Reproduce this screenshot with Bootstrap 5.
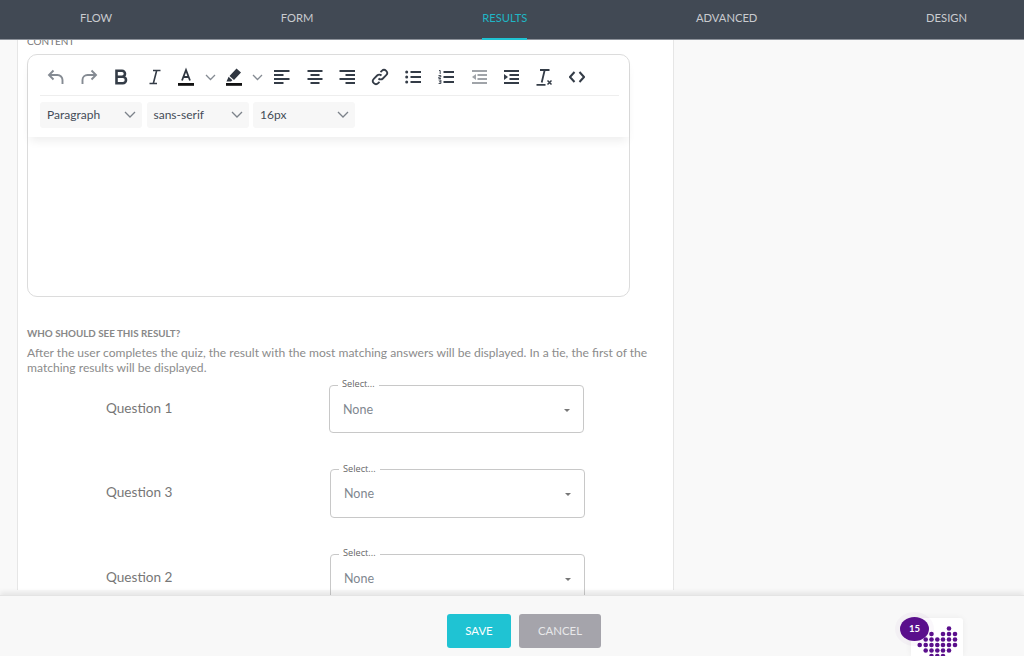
<!DOCTYPE html>
<html lang="en"><head><meta charset="utf-8"><title>Results</title>
<link href="https://cdn.jsdelivr.net/npm/bootstrap@5.3.0/dist/css/bootstrap.min.css" rel="stylesheet">
<style>
html,body{height:100%;overflow:hidden}
body{background:#f9f9f9;font-family:"Lato","Open Sans",sans-serif;color:#888}
.shell{height:656px}
.topbar{height:40px;background:#414954;padding:0 57px 0 80px;box-shadow:inset 0 -1px 0 #8d929a;z-index:3}
.tab-link{height:40px;line-height:36px;font-size:11.200px;color:#c9cbd0;text-decoration:none;border-bottom:2px solid transparent}
.tab-link.on{color:#1fb6c6;border-bottom-color:#1fc3d3}
.stage{min-height:0;overflow:hidden}
.panel{width:657px;margin-left:17px;background:#fff;border:solid #e6e6e6;border-width:0 1px;padding:0 9px;height:100%}
.sect-label{font-size:10px;line-height:12px;color:#777;margin:-5px 0 0}
.editor{width:603px;height:243px;margin-top:7px;border:1px solid #dcdcdc;border-radius:10px;background:#fff}
.tools{height:82px;padding:0 10px 0 12px;box-shadow:0 6px 10px -2px rgba(0,0,0,.07);border-radius:10px 10px 0 0}
.tool-row{height:41px;border-bottom:1px solid #eee}
.tbtn{width:32.800px;height:24px;margin-top:10px;flex:none;display:flex;align-items:center;justify-content:center;color:#343c47}
.tbtn svg{display:block}
.muted-i{color:#858b93}
.faint-i{color:#a0a4a9}
.w-a{width:29px}.w-b{width:20px}.w-c{width:28px}.w-d{width:18px}.w-e{width:32px}
.pick-row{gap:4.500px;padding-top:6px}
.pick{height:26px;background:#f7f7f7;border-radius:3px;font-size:12px;color:#444c57;padding:0 6px 1px 7px}
.w1,.w2,.w3{width:102px}
.sub-head{font-size:9.800px;line-height:12px;font-weight:700;color:#888;margin:30px 0 0}
.sub-text{font-size:12.100px;line-height:15px;color:#8b8b8b;margin:5.500px 0 0}
.q-row{height:53px;margin-top:31.500px}
.q-row.first{margin-top:5.500px}
.q-name{width:302px;padding-left:79px;margin-top:3px;font-size:13.600px;color:#777;flex:none}
.q-row.shifted .q-name{width:303px}
.notched{width:255px;height:53px;border:1px solid #c8c8c8;border-radius:4px;padding:0 13px;margin:0}
.notched legend{float:none;width:auto;font-size:9.200px;line-height:8px;margin:0 0 0 -5px;padding:0 4px 2px;color:#666;font-family:"Open Sans",sans-serif}
.none-val{font-size:12.500px;color:#7f8790;height:40px}
.mini-caret{width:0;height:0;border:3px solid transparent;border-top:3px solid #777;border-bottom:0}
.bottom{height:61px;background:#f8f8f8;border-top:1px solid #e4e4e4;box-shadow:0 -3px 5px rgba(0,0,0,.08);z-index:3;position:relative;padding-left:447px;padding-top:18px;gap:8px}
.b-save,.b-cancel{height:34px;font-size:11.400px;border-radius:3px;color:#fff;padding:0 0 2px;border:0}
.b-save{width:64px;background:#1fc3d3}
.b-cancel{width:82px;background:#a5a4ab;color:#e8e8ea}
.logo-tile{position:absolute;left:911px;top:22px;width:52px;height:38px;background:#fff;border-radius:3px 3px 0 0;box-shadow:0 0 6px rgba(0,0,0,.06);overflow:hidden}
.count-pill{position:absolute;left:900px;top:21px;width:29px;height:24px;border-radius:50%;background:#5a0f8c;color:#fff;font-size:9.500px;font-weight:700;box-shadow:0 0 0 5px rgba(90,15,140,.03)}
</style></head><body>
<div class="shell d-flex flex-column">
<nav class="topbar d-flex justify-content-between flex-none position-relative">
<a class="tab-link" href="#">FLOW</a><a class="tab-link" href="#">FORM</a><a class="tab-link on" href="#">RESULTS</a><a class="tab-link" href="#">ADVANCED</a><a class="tab-link" href="#">DESIGN</a>
</nav>
<main class="stage flex-grow-1">
<div class="panel">
<p class="sect-label">CONTENT</p>
<div class="editor">
<div class="tools">
<div class="tool-row d-flex">
<span class="tbtn muted-i"><svg width="18" height="18" viewBox="0 0 18 18" fill="none" stroke="currentColor" stroke-width="1.900"><path d="M6.500 2.500 2 7l4.500 4.500M2 7h8.500a5 5 0 0 1 5 5v4"/></svg></span>
<span class="tbtn muted-i"><svg width="18" height="18" viewBox="0 0 18 18" fill="none" stroke="currentColor" stroke-width="1.900"><path d="M11.500 2.500 16 7l-4.500 4.500M16 7H7.500a5 5 0 0 0-5 5v4"/></svg></span>
<span class="tbtn"><svg width="16" height="16" viewBox="0 0 16 16" fill="none" stroke="currentColor" stroke-width="2.600"><path d="M2.500 1.800h5.500a3 3 0 0 1 0 6H2.500zM2.500 7.800h6.300a3.200 3.200 0 0 1 0 6.400H2.500z"/></svg></span>
<span class="tbtn"><svg width="16" height="16" viewBox="0 0 16 16" fill="none" stroke="currentColor" stroke-width="1.600"><path d="M6 1.500h7.500M2.500 14.500H10M9.700 1.500l-3.400 13"/></svg></span>
<span class="tbtn w-a"><svg width="18" height="20" viewBox="0 0 18 20"><path d="M5 13.500 9 3l4 10.500M6.300 10h5.400" fill="none" stroke="#2f3640" stroke-width="1.800"/><rect x="1" y="16" width="16" height="2.800" fill="#111"/></svg></span>
<span class="tbtn w-b muted-i"><svg width="11" height="7" viewBox="0 0 11 7" fill="none" stroke="currentColor" stroke-width="1.300"><path d="m1 1 4.500 4.500L10 1"/></svg></span>
<span class="tbtn w-c"><svg width="18" height="20" viewBox="0 0 18 20"><path d="m11.500 1.500 4.500 4-7 7.500-4.500-4zM3.600 9.700l3.800 3.500-1.400 1.300H1.500z" fill="#2f3640"/><rect x="1" y="16" width="16" height="2.800" fill="#111"/></svg></span>
<span class="tbtn w-d muted-i"><svg width="11" height="7" viewBox="0 0 11 7" fill="none" stroke="currentColor" stroke-width="1.300"><path d="m1 1 4.500 4.500L10 1"/></svg></span>
<span class="tbtn w-e"><svg width="16" height="14" viewBox="0 0 16 14" fill="none" stroke="currentColor" stroke-width="1.900"><path d="M0 1h15.500M0 5h9.500M0 9h15.500M0 13h9.500"/></svg></span>
<span class="tbtn"><svg width="16" height="14" viewBox="0 0 16 14" fill="none" stroke="currentColor" stroke-width="1.900"><path d="M.5 1h15M3.500 5h9M.5 9h15M3.500 13h9"/></svg></span>
<span class="tbtn"><svg width="16" height="14" viewBox="0 0 16 14" fill="none" stroke="currentColor" stroke-width="1.900"><path d="M.5 1H16M6.500 5H16M.5 9H16M6.500 13H16"/></svg></span>
<span class="tbtn"><svg width="18" height="18" viewBox="0 0 18 18" fill="none" stroke="currentColor" stroke-width="1.800"><path d="M7.500 10.500a3.100 3.100 0 0 0 4.400 0l3.300-3.300a3.100 3.100 0 0 0-4.400-4.400L9.500 4.100M10.500 7.500a3.100 3.100 0 0 0-4.400 0l-3.300 3.300a3.100 3.100 0 0 0 4.400 4.400l1.300-1.300"/></svg></span>
<span class="tbtn"><svg width="16" height="14" viewBox="0 0 16 14"><path d="M5.500 2H16M5.500 7H16M5.500 12H16" stroke="currentColor" stroke-width="1.800"/><circle cx="1.700" cy="2" r="1.500" fill="currentColor"/><circle cx="1.700" cy="7" r="1.500" fill="currentColor"/><circle cx="1.700" cy="12" r="1.500" fill="currentColor"/></svg></span>
<span class="tbtn"><svg width="16" height="14" viewBox="0 0 16 14" fill="none" stroke="currentColor"><path d="M5.500 2H16M5.500 7H16M5.500 12H16" stroke-width="1.800"/><path d="M1 .5h1.200v3.500M.5 5.500h2.300v1.500H.8v1.500h2.200M.6 10h2.300v3.500H.6M1 11.800h2" stroke-width=".9"/></svg></span>
<span class="tbtn faint-i"><svg width="16" height="14" viewBox="0 0 16 14"><path d="M1 1h15M6.500 5H16M6.500 9H16M1 13h15" fill="none" stroke="currentColor" stroke-width="1.800"/><path d="M5 4 1 7l4 3z" fill="currentColor"/></svg></span>
<span class="tbtn"><svg width="16" height="14" viewBox="0 0 16 14"><path d="M1 1h15M6.500 5H16M6.500 9H16M1 13h15" fill="none" stroke="currentColor" stroke-width="1.800"/><path d="m1 4 4 3-4 3z" fill="currentColor"/></svg></span>
<span class="tbtn"><svg width="18" height="18" viewBox="0 0 18 18" fill="none" stroke="currentColor"><path d="M5 2h9.500M9.700 2 6.700 14.500M1.500 16.800h9" stroke-width="1.800"/><path d="m12.500 12.500 4 4M16.500 12.500l-4 4" stroke-width="1.500"/></svg></span>
<span class="tbtn"><svg width="16" height="12" viewBox="0 0 16 12" fill="none" stroke="currentColor" stroke-width="2"><path d="M5.500 1 1 6l4.500 5M10.500 1 15 6l-4.500 5"/></svg></span>
</div>
<div class="pick-row d-flex">
<div class="pick w1 d-flex align-items-center justify-content-between"><span>Paragraph</span><svg width="12" height="7" viewBox="0 0 12 7" fill="none" stroke="#7c828a" stroke-width="1.300"><path d="m1 1 5 5 5-5"/></svg></div>
<div class="pick w2 d-flex align-items-center justify-content-between"><span>sans-serif</span><svg width="12" height="7" viewBox="0 0 12 7" fill="none" stroke="#7c828a" stroke-width="1.300"><path d="m1 1 5 5 5-5"/></svg></div>
<div class="pick w3 d-flex align-items-center justify-content-between"><span>16px</span><svg width="12" height="7" viewBox="0 0 12 7" fill="none" stroke="#7c828a" stroke-width="1.300"><path d="m1 1 5 5 5-5"/></svg></div>
</div>
</div>
</div>
<p class="sub-head">WHO SHOULD SEE THIS RESULT?</p>
<p class="sub-text">After the user completes the quiz, the result with the most matching answers will be displayed. In a tie, the first of the matching results will be displayed.</p>
<div class="q-row first d-flex align-items-center"><div class="q-name">Question 1</div><fieldset class="notched"><legend>Select...</legend><div class="none-val d-flex align-items-center justify-content-between"><span>None</span><span class="mini-caret"></span></div></fieldset></div>
<div class="q-row shifted d-flex align-items-center"><div class="q-name">Question 3</div><fieldset class="notched"><legend>Select...</legend><div class="none-val d-flex align-items-center justify-content-between"><span>None</span><span class="mini-caret"></span></div></fieldset></div>
<div class="q-row shifted d-flex align-items-center"><div class="q-name">Question 2</div><fieldset class="notched"><legend>Select...</legend><div class="none-val d-flex align-items-center justify-content-between"><span>None</span><span class="mini-caret"></span></div></fieldset></div>
</div>
</main>
<footer class="bottom d-flex flex-none">
<button type="button" class="btn b-save">SAVE</button>
<button type="button" class="btn b-cancel">CANCEL</button>
<div class="logo-tile"><svg width="52" height="38" viewBox="911 618 52 38" fill="#5a0f8c"><g>
<circle cx="949" cy="628.500" r="2.300"/>
<circle cx="931.500" cy="634" r="2.300"/><circle cx="943" cy="634" r="2.300"/><circle cx="949" cy="634" r="2.300"/><circle cx="955" cy="634" r="2.300"/>
<circle cx="925.700" cy="639.500" r="2.300"/><circle cx="931.500" cy="639.500" r="2.300"/><circle cx="937.300" cy="639.500" r="2.300"/><circle cx="943" cy="639.500" r="2.300"/><circle cx="949" cy="639.500" r="2.300"/><circle cx="955" cy="639.500" r="2.300"/>
<circle cx="919.700" cy="645" r="2.300"/><circle cx="925.700" cy="645" r="2.300"/><circle cx="931.500" cy="645" r="2.300"/><circle cx="937.300" cy="645" r="2.300"/><circle cx="943" cy="645" r="2.300"/><circle cx="949" cy="645" r="2.300"/><circle cx="955" cy="645" r="2.300"/>
<circle cx="925.700" cy="650.500" r="2.300"/><circle cx="931.500" cy="650.500" r="2.300"/><circle cx="937.300" cy="650.500" r="2.300"/><circle cx="943" cy="650.500" r="2.300"/><circle cx="949" cy="650.500" r="2.300"/>
<circle cx="931.500" cy="656" r="2.300"/><circle cx="937.300" cy="656" r="2.300"/><circle cx="943" cy="656" r="2.300"/>
</g></svg></div>
<div class="count-pill d-flex align-items-center justify-content-center">15</div>
</footer>
</div>
<script src="https://cdn.jsdelivr.net/npm/bootstrap@5.3.0/dist/js/bootstrap.bundle.min.js"></script>
</body></html>
